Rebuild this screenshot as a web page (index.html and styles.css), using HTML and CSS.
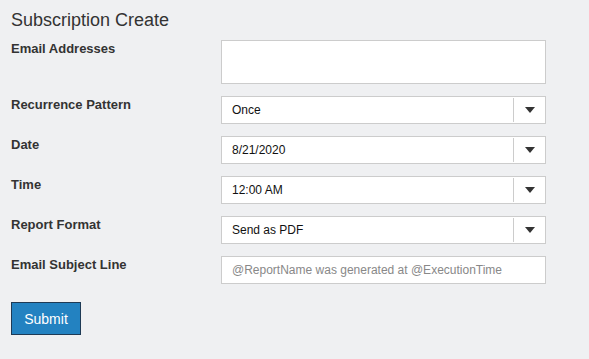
FILE: index.html
```html
<!DOCTYPE html>
<html lang="en">
<head>
    <meta charset="UTF-8">
    <meta name="viewport" content="width=device-width, initial-scale=1.0">
    <title>Subscription Create</title>
    <link rel="stylesheet" href="styles.css">
</head>
<body>
    <div class="page">
        <h1 class="page-title">Subscription Create</h1>
        <form class="sub-form" onsubmit="return false">
            <div class="form-row tall">
                <label class="form-label">Email Addresses</label>
                <textarea class="form-text area"></textarea>
            </div>
            <div class="form-row">
                <label class="form-label">Recurrence Pattern</label>
                <div class="dropdown">
                    <span class="dropdown-value">Once</span>
                    <span class="dropdown-toggle"><span class="caret"></span></span>
                </div>
            </div>
            <div class="form-row">
                <label class="form-label">Date</label>
                <div class="dropdown">
                    <span class="dropdown-value">8/21/2020</span>
                    <span class="dropdown-toggle"><span class="caret"></span></span>
                </div>
            </div>
            <div class="form-row">
                <label class="form-label">Time</label>
                <div class="dropdown">
                    <span class="dropdown-value">12:00 AM</span>
                    <span class="dropdown-toggle"><span class="caret"></span></span>
                </div>
            </div>
            <div class="form-row">
                <label class="form-label">Report Format</label>
                <div class="dropdown">
                    <span class="dropdown-value">Send as PDF</span>
                    <span class="dropdown-toggle"><span class="caret"></span></span>
                </div>
            </div>
            <div class="form-row">
                <label class="form-label">Email Subject Line</label>
                <input class="form-text" type="text" placeholder="@ReportName was generated at @ExecutionTime">
            </div>
            <div class="form-actions">
                <button class="submit-btn" type="submit">Submit</button>
            </div>
        </form>
    </div>
</body>
</html>
```

FILE: styles.css
```css
/* Reset styles */
* {
    margin: 0;
    padding: 0;
    box-sizing: border-box;
    font-family: 'Liberation Sans', Arial, sans-serif;
}

body {
    background: #eff0f2;
    color: #333333;
}

.page {
    padding: 10px 11px;
}

.page-title {
    font-size: 18px;
    font-weight: normal;
    line-height: 21px;
    color: #333333;
    margin-bottom: 9px;
}

.sub-form {
    display: flex;
    flex-direction: column;
    gap: 12px;
}

.form-row {
    display: grid;
    grid-template-columns: 210px 325px;
    align-items: start;
}

.form-label {
    font-size: 13px;
    font-weight: bold;
    line-height: 15px;
    padding-top: 1px;
    color: #333333;
}

.form-text {
    display: block;
    width: 325px;
    height: 28px;
    border: 1px solid #cccccc;
    background: #ffffff;
    font-size: 12px;
    color: #222222;
    padding: 0 10px;
    outline: none;
}

.form-text::placeholder {
    color: #888888;
}

.area {
    height: 44px;
    resize: none;
    padding: 6px 10px;
}

.dropdown {
    display: flex;
    align-items: stretch;
    width: 325px;
    height: 28px;
    border: 1px solid #cccccc;
    background: #ffffff;
}

.dropdown-value {
    flex: 1;
    display: flex;
    align-items: center;
    padding-left: 10px;
    font-size: 12px;
    color: #111111;
}

.dropdown-toggle {
    width: 32px;
    margin: 1px 0;
    border-left: 1px solid #cccccc;
    display: flex;
    align-items: center;
    justify-content: center;
}

.caret {
    width: 0;
    height: 0;
    border-left: 5px solid transparent;
    border-right: 5px solid transparent;
    border-top: 6px solid #333333;
    margin-left: 1px;
}

.form-actions {
    padding-top: 6px;
}

.submit-btn {
    width: 70px;
    height: 33px;
    background: #2382c1;
    border: 1px solid #1e3a55;
    color: #ffffff;
    font-size: 14px;
    cursor: pointer;
}
```
